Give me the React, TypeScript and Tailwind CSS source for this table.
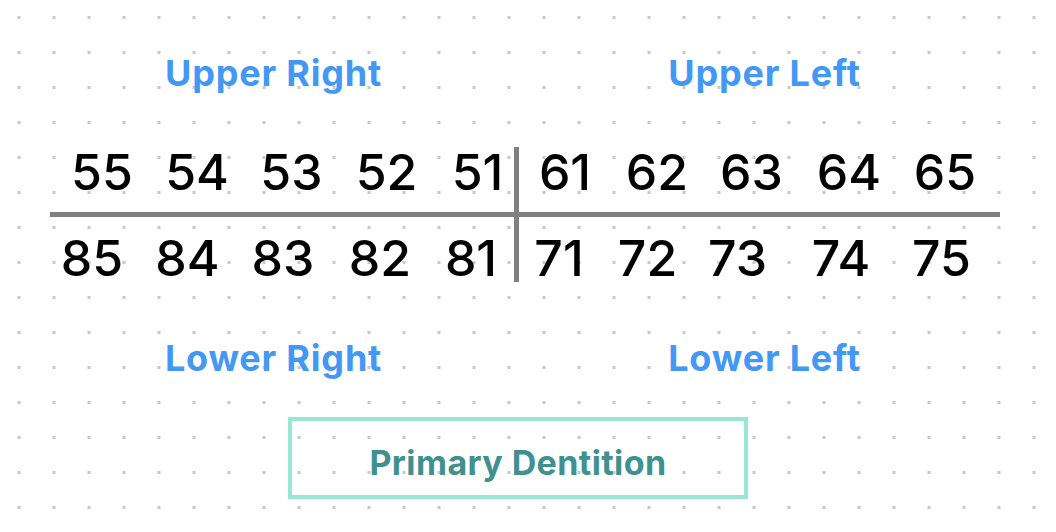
import React from "react";

const font = { fontFamily: "Inter, 'Noto Sans', sans-serif" };

type N = { t: string; ml: string };

const topLeft: N[] = [
  { t: "55", ml: "ml-[12px]" },
  { t: "54", ml: "ml-[15px]" },
  { t: "53", ml: "ml-[14.5px]" },
  { t: "52", ml: "ml-[15px]" },
  { t: "51", ml: "ml-[11px]" },
];
const topRight: N[] = [
  { t: "61", ml: "ml-[6px]" },
  { t: "62", ml: "ml-[12px]" },
  { t: "63", ml: "ml-[14.5px]" },
  { t: "64", ml: "ml-[17.5px]" },
  { t: "65", ml: "ml-[16px]" },
];
const botLeft: N[] = [
  { t: "85", ml: "ml-[2px]" },
  { t: "84", ml: "ml-[15.5px]" },
  { t: "83", ml: "ml-[15.5px]" },
  { t: "82", ml: "ml-[17px]" },
  { t: "81", ml: "ml-[11px]" },
];
const botRight: N[] = [
  { t: "71", ml: "ml-[0px]" },
  { t: "72", ml: "ml-[8.5px]" },
  { t: "73", ml: "ml-[10px]" },
  { t: "74", ml: "ml-[23.5px]" },
  { t: "75", ml: "ml-[20.5px]" },
];

function Num({ t, ml }: N) {
  return (
    <div className={`${ml} w-[80px] shrink-0 text-center text-[50px] leading-[50px] font-medium text-black`}>
      {t}
    </div>
  );
}

function Label({ text, w }: { text: string; w: string }) {
  return (
    <div className={`${w} text-center text-[36px] leading-[36px] font-bold text-[#4498f5] tracking-[0.8px]`}>
      {text}
    </div>
  );
}

export default function App() {
  return (
    <div
      className="w-[1056px] h-[532px] bg-white bg-[image:radial-gradient(circle,#c9c9c9_1.5px,transparent_2px)] bg-[size:35px_35px] bg-[position:1.5px_0px] flex flex-col"
      style={font}
    >
      <div className="flex pt-[55px]">
        <Label text="Upper Right" w="w-[547px]" />
        <Label text="Upper Left" w="w-[435px]" />
      </div>

      <div className="ml-[50px] w-[950px] mt-[56px] flex flex-col">
        <div className="flex h-[65px]">
          <div className="w-[469px] border-r-[5px] border-[#808080] flex">
            {topLeft.map((n) => (
              <Num key={n.t} {...n} />
            ))}
          </div>
          <div className="flex-1 flex">
            {topRight.map((n) => (
              <Num key={n.t} {...n} />
            ))}
          </div>
        </div>
        <div className="h-[5px] bg-[#808080]" />
        <div className="flex h-[65px]">
          <div className="w-[469px] border-r-[5px] border-[#808080] pt-[16px] flex">
            {botLeft.map((n) => (
              <Num key={n.t} {...n} />
            ))}
          </div>
          <div className="flex-1 pt-[16px] flex">
            {botRight.map((n) => (
              <Num key={n.t} {...n} />
            ))}
          </div>
        </div>
      </div>

      <div className="flex mt-[58px]">
        <Label text="Lower Right" w="w-[547px]" />
        <Label text="Lower Left" w="w-[435px]" />
      </div>

      <div className="ml-[288px] mt-[41px] w-[460px] h-[82px] border-4 border-[#98e6d4] flex items-center justify-center pt-[9px]">
        <span className="text-[34px] leading-[36px] font-bold text-[#3f9190] tracking-[0.4px]">Primary Dentition</span>
      </div>
    </div>
  );
}
